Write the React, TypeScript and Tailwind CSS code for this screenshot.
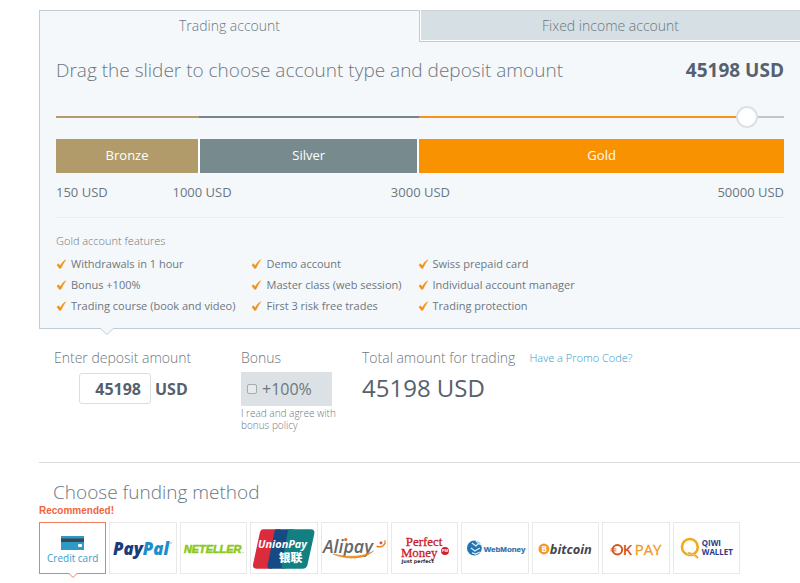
import { useState } from "react";
import type { ReactNode } from "react";

const MIN = 150;
const MAX = 50000;

const tiers = [
  { name: "Bronze", from: 150, start: 0, end: 19.6, color: "bg-[#b19b6b]", width: "w-[19.8%]" },
  { name: "Silver", from: 1000, start: 19.6, end: 49.8, color: "bg-[#778b8e]", width: "w-[30.1%]" },
  { name: "Gold", from: 3000, start: 49.8, end: 100, color: "bg-[#f89200]", width: "w-[50.1%]" },
];

const features = [
  ["Withdrawals in 1 hour", "Bonus +100%", "Trading course (book and video)"],
  ["Demo account", "Master class (web session)", "First 3 risk free trades"],
  ["Swiss prepaid card", "Individual account manager", "Trading protection"],
];

// every tier takes its own share of the slider, so the scale is linear only inside a tier
function amountToPosition(amount: number) {
  const i = amount >= 3000 ? 2 : amount >= 1000 ? 1 : 0;
  const t = tiers[i];
  const to = i < 2 ? tiers[i + 1].from : MAX;
  return t.start + ((amount - t.from) / (to - t.from)) * (t.end - t.start);
}

function positionToAmount(position: number) {
  const i = position >= 49.8 ? 2 : position >= 19.6 ? 1 : 0;
  const t = tiers[i];
  const to = i < 2 ? tiers[i + 1].from : MAX;
  return Math.round(t.from + ((position - t.start) / (t.end - t.start)) * (to - t.from));
}

function trackColors(p: number) {
  const a = Math.min(p, 19.6);
  const b = Math.min(p, 49.8);
  return `linear-gradient(to right, #b39a70 ${a}%, #76848c ${a}%, #76848c ${b}%, #f6921e ${b}%, #f6921e ${p}%, #bfc6cb ${p}%)`;
}

function Check() {
  return (
    <svg viewBox="0 0 11 10" className="mt-px h-[10px] w-[11px] shrink-0" aria-hidden="true">
      <path d="M0.8 6L2.4 4.6L4.2 6.6C5.6 4 7.400 1.800 10 0.600C8.200 3.400 6.500 6.400 4.900 9.400L3.400 9.400Z" fill="#f0921a" stroke="#f3a53f" strokeWidth="0.300" />
    </svg>
  );
}

function Logo({ children }: { children: ReactNode }) {
  return (
    <svg viewBox="0 0 66 50" className="h-[50px] w-full" aria-hidden="true">
      {children}
    </svg>
  );
}

function CreditCard() {
  return (
    <span className="flex flex-col items-center gap-px pt-1">
      <svg viewBox="0 0 23 14" className="h-[14px] w-[23px]" aria-hidden="true">
        <rect width="23" height="14" fill="#2e9bc6" />
        <rect y="2.5" width="23" height="3.5" fill="#3c4650" />
        <rect x="17" y="8" width="4" height="3" rx="1" fill="#fff" />
      </svg>
      <span className="text-[10px] leading-[14px] text-[#3d9cc4]">Credit card</span>
    </span>
  );
}

function PayPal() {
  return (
    <Logo>
      <text x="3" y="32" fontFamily="Open Sans, sans-serif" fontWeight="800" fontStyle="italic" fontSize="17" fill="#1b3d79">
        Pay<tspan fill="#1f8dc9">Pal</tspan>
      </text>
      <path d="M60 20h2.500" stroke="#5fb0d8" strokeWidth="0.8" />
    </Logo>
  );
}

function Neteller() {
  return (
    <Logo>
      <text x="3" y="30" fontFamily="Liberation Sans, sans-serif" fontWeight="bold" fontStyle="italic" fontSize="11" fill="#8cc820" stroke="#8cc820" strokeWidth="0.6">
        NETELLER
      </text>
      <circle cx="62.500" cy="29.500" r="0.800" fill="#b8dc78" />
    </Logo>
  );
}

function UnionPay() {
  return (
    <Logo>
      <path d="M12 6H30L21 46H6Q1 46 2.200 41L9 9Q9.800 6 12 6Z" fill="#dc2b3c" />
      <path d="M25 6H43L34 46H19Q16 46 17 41L23.500 9Q24 6 25 6Z" fill="#174a82" />
      <path d="M39 6H60Q65 6 63.800 11L57 42Q56 46 52 46H33Q30 46 31 41L37 9Q37.700 6 39 6Z" fill="#128083" />
      <text x="7" y="25" fontFamily="Open Sans, sans-serif" fontWeight="bold" fontStyle="italic" fontSize="11" fill="#fff">
        UnionPay
      </text>
      <text x="28" y="39" fontFamily="Noto Sans CJK SC, sans-serif" fontWeight="900" fontSize="12" fill="#fff">
        银联
      </text>
    </Logo>
  );
}

function Alipay() {
  return (
    <Logo>
      <text x="1" y="30" fontFamily="Open Sans, sans-serif" fontWeight="600" fontStyle="italic" fontSize="18" fill="#66686b">
        Alipay
      </text>
      <path d="M11 31C24 37 42 37 52 28C42 34 28 35 11 31Z" fill="#ed8b1c" stroke="#ed8b1c" strokeWidth="0.600" />
      <path d="M55 23C59 25 63 23 64 19" fill="none" stroke="#ed7b1c" strokeWidth="1.400" />
      <circle cx="59.500" cy="20" r="1.500" fill="#e5532b" />
      <circle cx="24" cy="16.500" r="1.600" fill="#ed6b1c" />
      <circle cx="63.500" cy="18" r="0.900" fill="#ed8b1c" />
    </Logo>
  );
}

function PerfectMoney() {
  return (
    <Logo>
      <text x="14" y="23" fontFamily="Liberation Serif, serif" fontSize="13" fill="#c8202c" stroke="#c8202c" strokeWidth="0.300">
        Perfect
      </text>
      <text x="9" y="34" fontFamily="Liberation Serif, serif" fontSize="13" fill="#c8202c" stroke="#c8202c" strokeWidth="0.300">
        Money
      </text>
      <circle cx="53.500" cy="28" r="4" fill="#d2202c" />
      <text x="50.500" y="29.500" fontFamily="Open Sans, sans-serif" fontWeight="bold" fontSize="4" fill="#fff">PM</text>
      <text x="9.500" y="40" fontFamily="DejaVu Sans, sans-serif" fontWeight="bold" fontSize="5" fill="#3a2a2c">
        Just perfect
      </text>
    </Logo>
  );
}

function WebMoney() {
  return (
    <Logo>
      <circle cx="12.500" cy="25" r="7.500" fill="#2474b4" />
      <path d="M10 20l4 3 3-3M9 25l4 3 5-3M10 30l4 1 4-2M14 18l5 4" fill="none" stroke="#d9ecf8" strokeWidth="1.300" />
      <text x="22" y="29" fontFamily="Liberation Sans, sans-serif" fontWeight="bold" fontSize="8" fill="#2d6ea8" stroke="#2d6ea8" strokeWidth="0.200">
        WebMoney
      </text>
    </Logo>
  );
}

function Bitcoin() {
  return (
    <Logo>
      <circle cx="11" cy="26" r="5.500" fill="#f49a2c" />
      <text x="8.500" y="29" fontFamily="Open Sans, sans-serif" fontWeight="bold" fontSize="8" fill="#fff">B</text>
      <text x="17" y="31" fontFamily="Open Sans, sans-serif" fontWeight="bold" fontStyle="italic" fontSize="13" fill="#45464a">
        bitcoin
      </text>
    </Logo>
  );
}

function OkPay() {
  return (
    <Logo>
      <circle cx="14.500" cy="26.800" r="4.800" fill="none" stroke="#d4541f" strokeWidth="1.900" />
      <path d="M7.500 25.900h6M7.500 27.900h6" stroke="#d4541f" strokeWidth="0.900" />
      <text x="20" y="32" fontFamily="Open Sans, sans-serif" fontWeight="600" fontSize="15" fill="#d4541f">K</text>
      <text x="32" y="32" fontFamily="Open Sans, sans-serif" fontSize="15" fill="#f29a1c" stroke="#f29a1c" strokeWidth="0.300">
        PAY
      </text>
    </Logo>
  );
}

function Qiwi() {
  return (
    <Logo>
      <circle cx="16" cy="24" r="8" fill="none" stroke="#f0ab1c" strokeWidth="2.600" />
      <path d="M14 30.500C18 30.500 21 32 24 35" fill="none" stroke="#e89a1c" strokeWidth="2.200" />
      <path d="M13 32C18 29.500 21 32 23 35" fill="none" stroke="#fff" strokeWidth="0.600" />
      <text x="28" y="23" fontFamily="Open Sans, sans-serif" fontWeight="bold" fontSize="8" fill="#2b3a8c">QIWI</text>
      <text x="28" y="32" fontFamily="Open Sans, sans-serif" fontWeight="bold" fontSize="8" fill="#2b3a8c">WALLET</text>
    </Logo>
  );
}

const methods = [
  { name: "Credit card", logo: <CreditCard /> },
  { name: "PayPal", logo: <PayPal /> },
  { name: "Neteller", logo: <Neteller /> },
  { name: "UnionPay", logo: <UnionPay /> },
  { name: "Alipay", logo: <Alipay /> },
  { name: "Perfect Money", logo: <PerfectMoney /> },
  { name: "WebMoney", logo: <WebMoney /> },
  { name: "Bitcoin", logo: <Bitcoin /> },
  { name: "OKPAY", logo: <OkPay /> },
  { name: "QIWI Wallet", logo: <Qiwi /> },
];

export default function App() {
  const [amount, setAmount] = useState(45198);
  const [method, setMethod] = useState("Credit card");
  const position = amountToPosition(Math.min(Math.max(amount, MIN), MAX));

  return (
    <main className="bg-white pt-[10px] pb-4 pl-[39px] font-['Open_Sans',sans-serif] text-[#6b7780]">
      {/* Account panel */}
      <section className="relative border-b border-l border-[#c3ccd2] bg-[#f5f8fb]">
        <div className="flex text-sm font-light">
          <button className="h-[32px] flex-1 border-t border-r border-[#c3ccd2] pb-[2px]">Trading account</button>
          <div className="flex-1 border-b border-[#c3ccd2] bg-white pb-px pl-px">
            <button className="h-[30px] w-full border-t border-[#c9d2d7] bg-[#d6dfe4]">Fixed income account</button>
          </div>
        </div>

        <div className="px-4 pb-3">
          <div className="flex h-[56px] items-center justify-between text-[19px]">
            <h1 className="font-light">Drag the slider to choose account type and deposit amount</h1>
            <output className="font-bold text-[#56616e]">{amount} USD</output>
          </div>

          <div className="relative flex h-[38px] items-center">
            <div className="h-[2px] w-full" style={{ background: trackColors(position) }} />
            <input
              type="range"
              aria-label="Deposit amount"
              min={0}
              max={100}
              step="any"
              value={position}
              onChange={(e) => setAmount(positionToAmount(Number(e.target.value)))}
              className="absolute -inset-x-[11px] h-[22px] cursor-pointer appearance-none bg-transparent [&::-webkit-slider-thumb]:size-[22px] [&::-webkit-slider-thumb]:appearance-none [&::-webkit-slider-thumb]:rounded-full [&::-webkit-slider-thumb]:border-2 [&::-webkit-slider-thumb]:border-[#dde1e4] [&::-webkit-slider-thumb]:bg-white"
            />
          </div>

          <div className="mt-[3px] flex h-[34px] text-[13px] text-white">
            {tiers.map((tier) => (
              <div
                key={tier.name}
                className={`flex items-center justify-center border-r-2 border-white last:border-r-0 ${tier.color} ${tier.width}`}
              >
                {tier.name}
              </div>
            ))}
          </div>

          <div className="flex h-[45px] items-center border-b border-[#e9edf0] pb-1 text-[13px]">
            <span className="w-[16%]">150 USD</span>
            <span className="w-[30%]">1000 USD</span>
            <span>3000 USD</span>
            <span className="ml-auto">50000 USD</span>
          </div>

          <h2 className="pt-[15px] text-[11px] leading-4 font-light">Gold account features</h2>
          <div className="mt-[4px] flex gap-4 text-[11px] leading-[21px]">
            {features.map((column) => (
              <ul key={column[0]}>
                {column.map((item) => (
                  <li key={item} className="flex items-center gap-1">
                    <Check />
                    {item}
                  </li>
                ))}
              </ul>
            ))}
          </div>
        </div>

        <svg viewBox="0 0 14 8" className="absolute top-full left-[60px] h-[8px] w-[14px]" aria-hidden="true">
          <path d="M0 0L7 6.500L14 0" fill="#f5f8fb" stroke="#c3ccd2" />
        </svg>
      </section>

      {/* Deposit summary */}
      <section className="flex items-start border-b border-[#d9dcde] pt-[17px] pb-[31px] pl-[15px]">
        <div className="w-[187px]">
          <label htmlFor="deposit" className="block text-sm leading-6 font-light">
            Enter deposit amount
          </label>
          <div className="mt-[3px] ml-[25px] flex items-center gap-1 text-base font-bold text-[#56616e]">
            <input
              id="deposit"
              type="text"
              value={amount}
              onChange={(e) => setAmount(Number(e.target.value) || 0)}
              className="h-[31px] w-[72px] rounded-[3px] border border-[#d9dee2] bg-white pr-[9px] text-right"
            />
            USD
          </div>
        </div>

        <div className="w-[121px]">
          <h2 className="text-sm leading-6 font-light">Bonus</h2>
          <label className="mt-[2px] flex h-[34px] w-[91px] items-center gap-[5px] bg-[#dbe1e5] pl-[6px] text-base">
            <input type="checkbox" className="size-[10px] appearance-none rounded-[2px] border border-[#a3abb0] bg-[#e6eaed] checked:bg-[#6b7780]" />
            +100%
          </label>
          <p className="w-[100px] pt-px text-[10px] leading-3 font-light">I read and agree with bonus policy</p>
        </div>

        <div>
          <div className="flex items-center gap-[14px]">
            <h2 className="text-sm leading-6 font-light">Total amount for trading</h2>
            <a href="#promo" className="text-[11px] font-light text-[#3a9ac6]">Have a Promo Code?</a>
          </div>
          <p className="text-2xl leading-9 text-[#56616e]">{amount} USD</p>
        </div>
      </section>

      {/* Funding methods */}
      <section>
        <h2 className="pt-[17px] pl-[14px] text-[19px] leading-6 font-light">Choose funding method</h2>
        <p className="font-['Liberation_Sans',sans-serif] text-[10px] leading-[14px] font-bold text-[#f2653a]">Recommended!</p>
        <div className="mt-[4px] grid max-w-[701px] grid-cols-10 gap-[3px]">
          {methods.map((m) => (
            <button
              key={m.name}
              aria-label={m.name}
              aria-pressed={m.name === method}
              onClick={() => setMethod(m.name)}
              className={`relative flex h-[52px] items-center justify-center border bg-white ${
                m.name === method ? "border-[#ee7f5e]" : "border-[#e9e9e9]"
              }`}
            >
              {m.logo}
              {m.name === method && (
                <svg viewBox="0 0 10 6" className="absolute top-full left-[28px] h-[6px] w-[10px]" aria-hidden="true">
                  <path d="M0.500 0L5 4.500L9.500 0" fill="#fff" stroke="#ee7f5e" />
                </svg>
              )}
            </button>
          ))}
        </div>
      </section>
    </main>
  );
}
